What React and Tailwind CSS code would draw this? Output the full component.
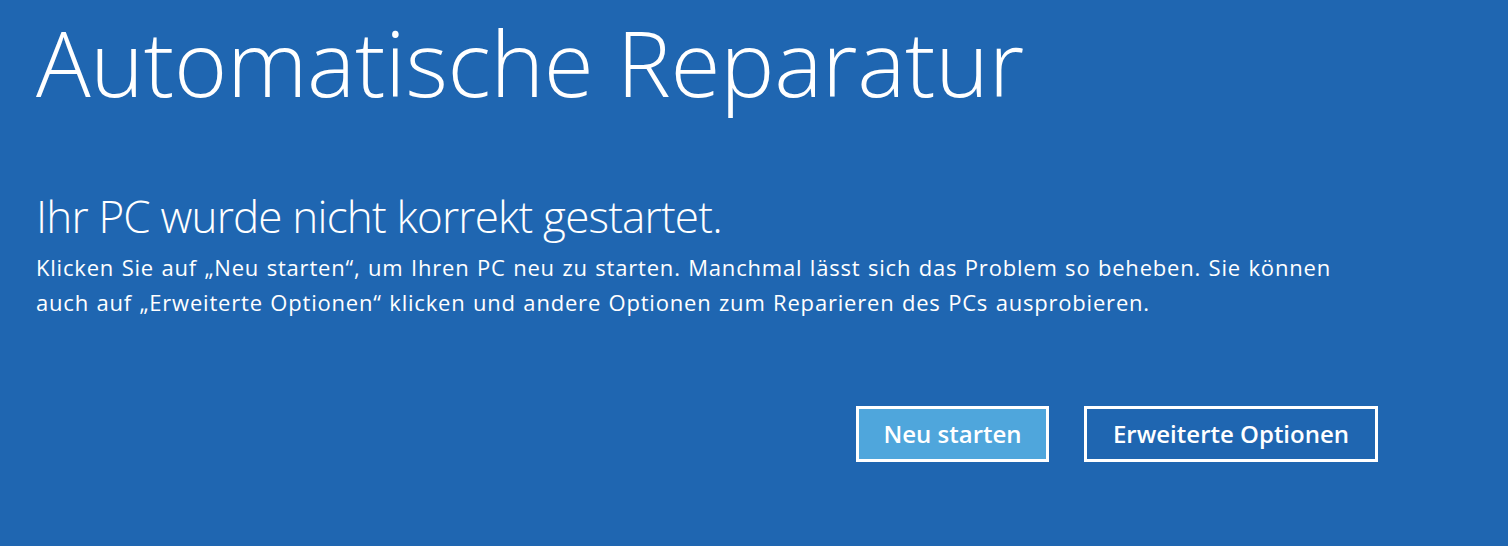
export default function App() {
    return (
        <div className="h-[546px] w-full overflow-hidden bg-[#1f66b1] text-white font-['Open_Sans',sans-serif]">
            <div className="pl-[36px]">
                <h1 className="text-[91px] font-light leading-[124px] tracking-[-0.3px]">Automatische Reparatur</h1>
                <h2 className="mt-[64px] text-[44px] font-light leading-[56px] tracking-[-0.8px]">Ihr PC wurde nicht korrekt gestartet.</h2>
                <p className="mt-[6px] text-[22px] leading-[35px] tracking-[0.8px] [word-spacing:1px] w-[1360px]">
                    Klicken Sie auf „Neu starten“, um Ihren PC neu zu starten. Manchmal lässt sich das Problem so beheben. Sie können<br />
                    auch auf „Erweiterte Optionen“ klicken und andere Optionen zum Reparieren des PCs ausprobieren.
                </p>
            </div>
            <div className="mt-[86px] flex pl-[856px] gap-[35px]">
                <button type="button" className="h-[56px] w-[193px] border-[3px] border-white bg-[#4fa6dc] text-[24px] font-semibold leading-none text-white">Neu starten</button>
                <button type="button" className="h-[56px] w-[294px] border-[3px] border-white bg-transparent text-[24px] font-semibold leading-none text-white">Erweiterte Optionen</button>
            </div>
        </div>
    )
}
